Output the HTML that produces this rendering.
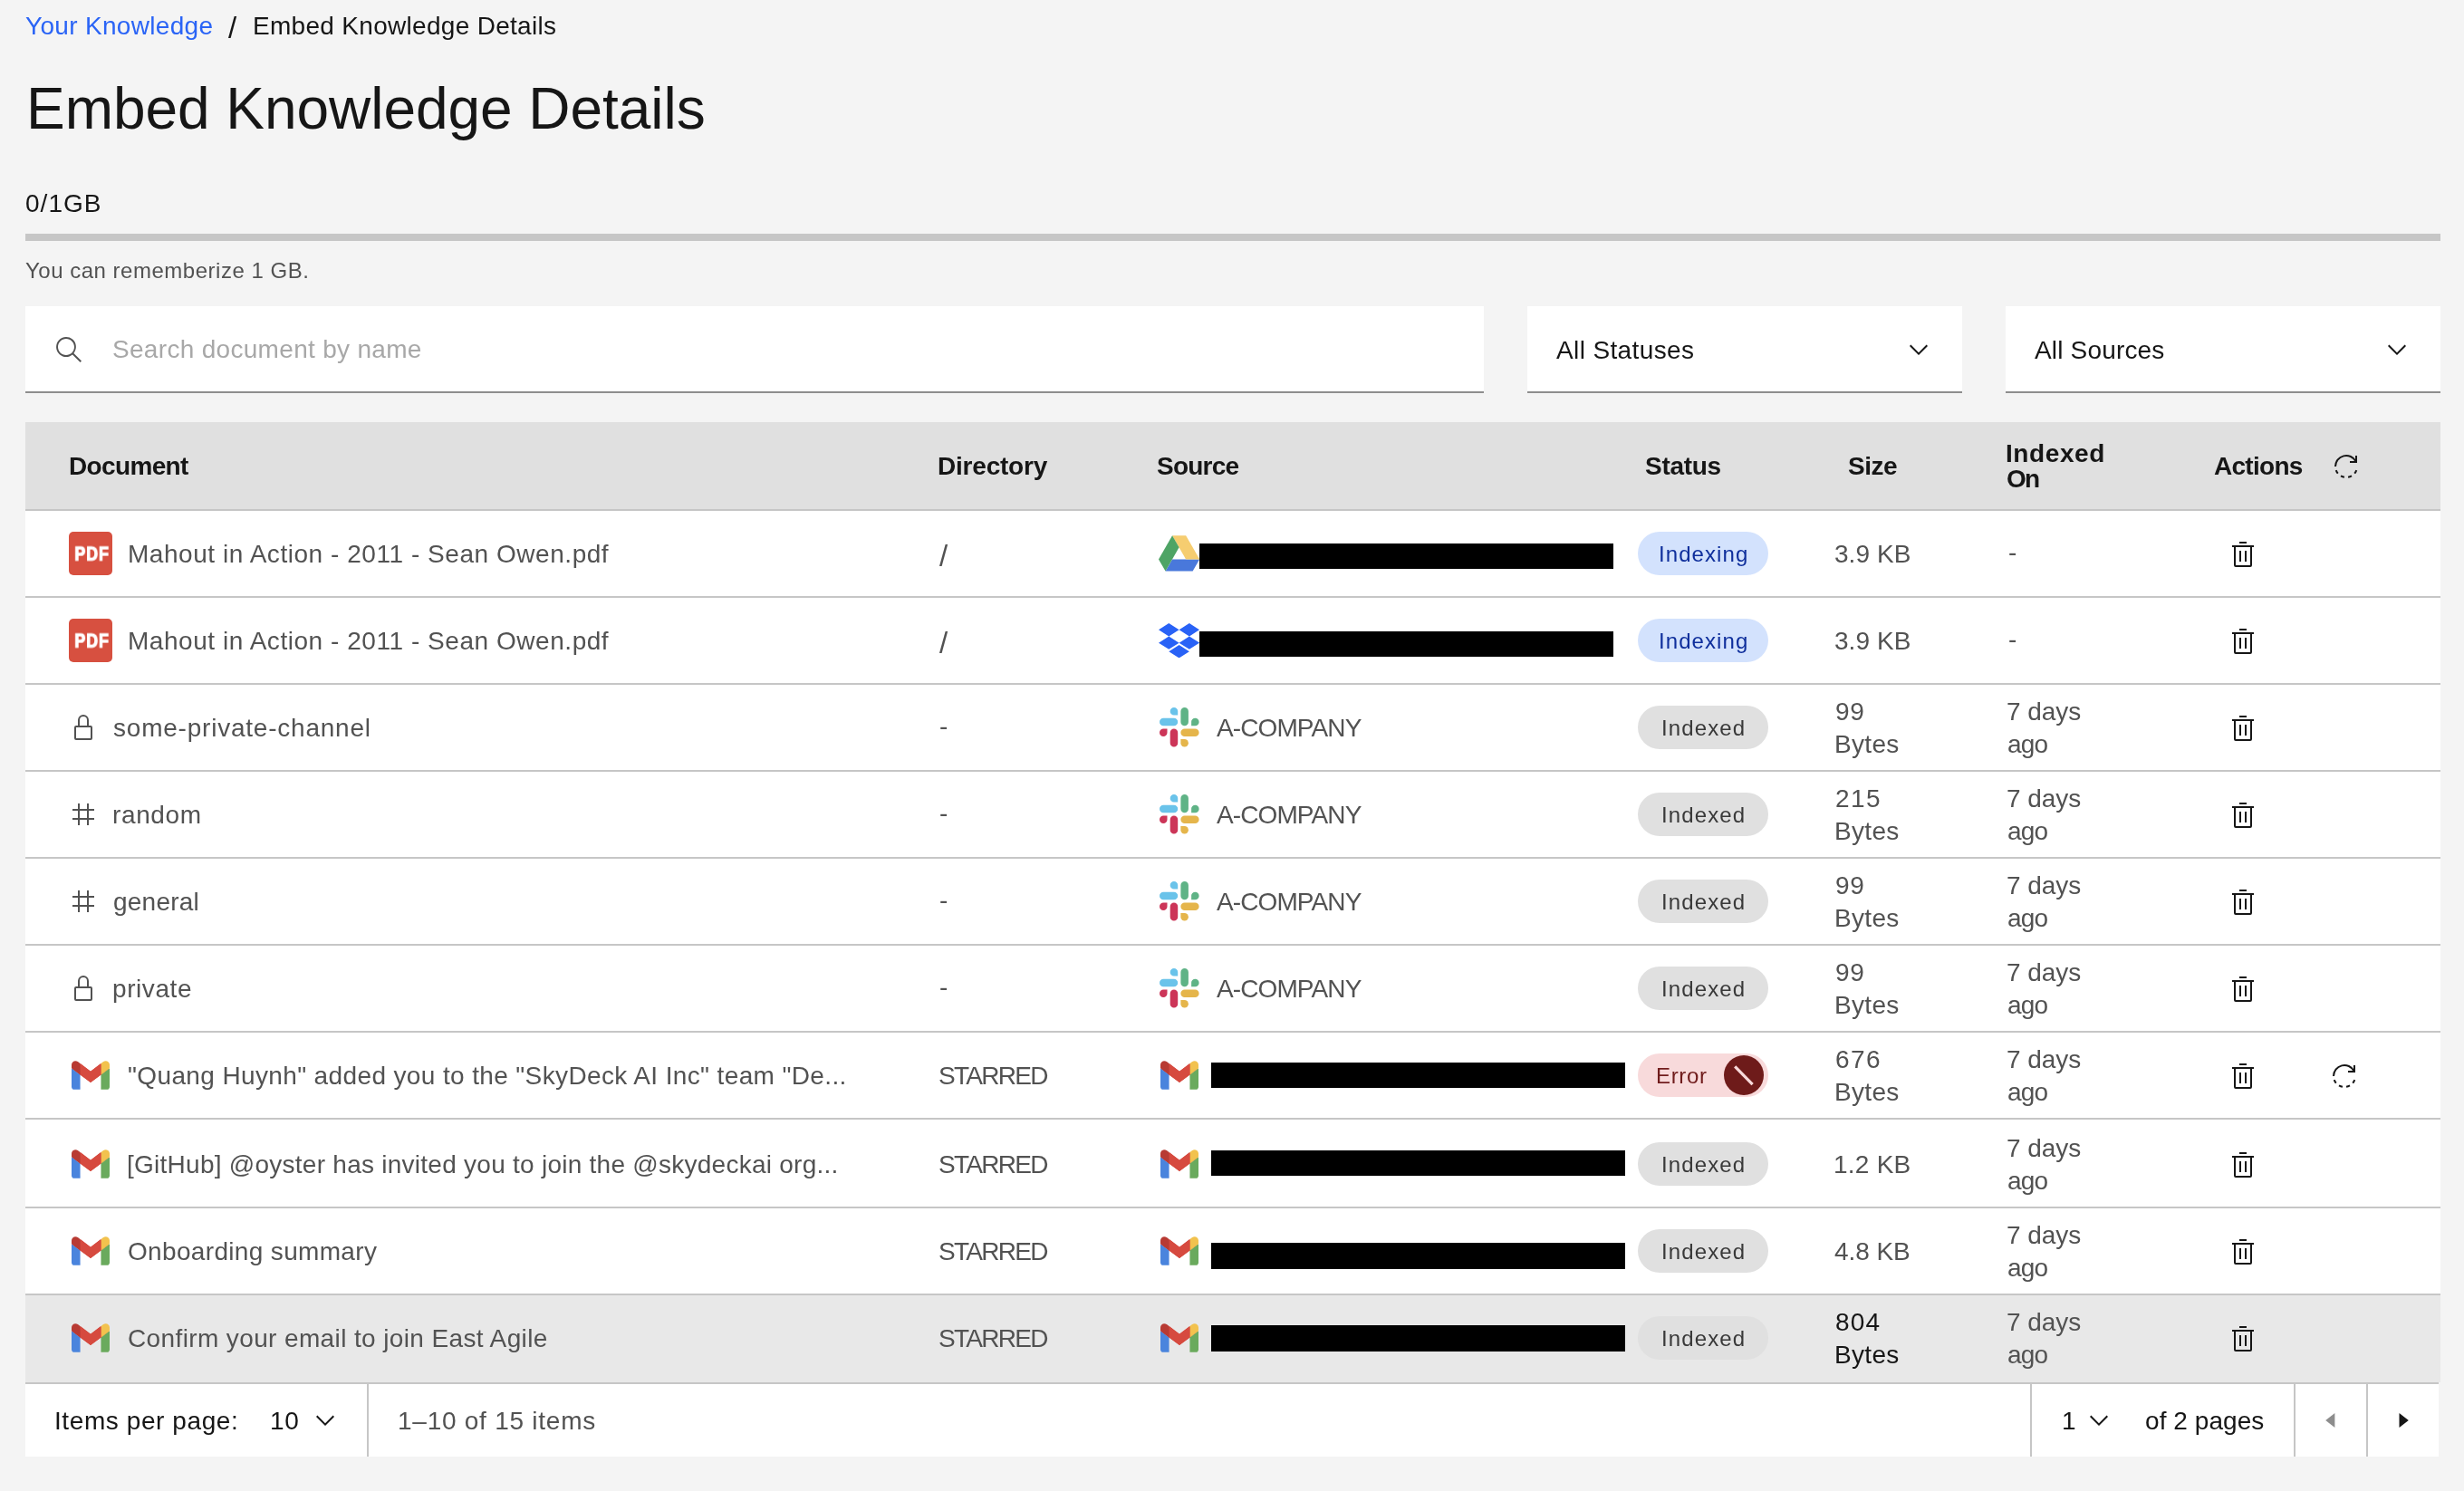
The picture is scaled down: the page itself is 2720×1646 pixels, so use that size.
<!DOCTYPE html>
<html lang="en"><head><meta charset="utf-8"><title>Embed Knowledge Details</title>
<style>
html,body{margin:0;padding:0;background:#f4f4f4;}
body{width:2720px;height:1646px;background:#f4f4f4;position:relative;overflow:hidden;font-family:"Liberation Sans",sans-serif;}
.b{position:absolute;display:block;}
.t{position:absolute;white-space:nowrap;line-height:1;will-change:transform;}
.pdf{width:48px;height:48px;border-radius:5px;background:#d75040;}
.pdf span{position:absolute;left:0;top:0;width:48px;text-align:center;font-weight:700;font-size:21.8px;line-height:1;color:#fff;letter-spacing:1.2px;-webkit-text-stroke:1.2px #fff;will-change:transform;transform:translate(1.6px,13.6px) scaleX(0.82);transform-origin:50% 50%;display:block;}
</style></head><body>
<div class="b" style="left:28px;top:258px;width:2666px;height:8px;background:#c6c6c6;"></div>
<div class="b" style="left:28px;top:338px;width:1610px;height:94px;background:#fff;"></div>
<div class="b" style="left:28px;top:432px;width:1610px;height:2px;background:#8d8d8d;"></div>
<div class="b" style="left:1686px;top:338px;width:480px;height:94px;background:#fff;"></div>
<div class="b" style="left:1686px;top:432px;width:480px;height:2px;background:#8d8d8d;"></div>
<div class="b" style="left:2214px;top:338px;width:480px;height:94px;background:#fff;"></div>
<div class="b" style="left:2214px;top:432px;width:480px;height:2px;background:#8d8d8d;"></div>
<div class="b" style="left:28px;top:466px;width:2666px;height:96px;background:#e0e0e0;"></div>
<div class="b" style="left:28px;top:562px;width:2666px;height:966px;background:#fff;"></div>
<div class="b" style="left:28px;top:1430px;width:2666px;height:96px;background:#e8e8e8;"></div>
<div class="b" style="left:28px;top:562px;width:2666px;height:2px;background:#c6c6c6;"></div>
<div class="b" style="left:28px;top:658px;width:2666px;height:2px;background:#c6c6c6;"></div>
<div class="b" style="left:28px;top:754px;width:2666px;height:2px;background:#c6c6c6;"></div>
<div class="b" style="left:28px;top:850px;width:2666px;height:2px;background:#c6c6c6;"></div>
<div class="b" style="left:28px;top:946px;width:2666px;height:2px;background:#c6c6c6;"></div>
<div class="b" style="left:28px;top:1042px;width:2666px;height:2px;background:#c6c6c6;"></div>
<div class="b" style="left:28px;top:1138px;width:2666px;height:2px;background:#c6c6c6;"></div>
<div class="b" style="left:28px;top:1234px;width:2666px;height:2px;background:#c6c6c6;"></div>
<div class="b" style="left:28px;top:1332px;width:2666px;height:2px;background:#c6c6c6;"></div>
<div class="b" style="left:28px;top:1428px;width:2666px;height:2px;background:#c6c6c6;"></div>
<div class="b" style="left:28px;top:1526px;width:2666px;height:2px;background:#c6c6c6;"></div>
<div class="b" style="left:28px;top:1528px;width:2664px;height:80px;background:#fff;"></div>
<div class="b" style="left:2692px;top:1526px;width:2px;height:82px;background:#f4f4f4;"></div>
<div class="b" style="left:405px;top:1528px;width:2px;height:80px;background:#c6c6c6;"></div>
<div class="b" style="left:2240.5px;top:1528px;width:2px;height:80px;background:#c6c6c6;"></div>
<div class="b" style="left:2531.5px;top:1528px;width:2px;height:80px;background:#c6c6c6;"></div>
<div class="b" style="left:2612.3px;top:1528px;width:2px;height:80px;background:#c6c6c6;"></div>
<div class="b" style="left:1324.4px;top:599.5px;width:457.0999999999999px;height:28.700000000000045px;background:#000;"></div>
<div class="b" style="left:1324.4px;top:696.6px;width:457.0999999999999px;height:28.699999999999932px;background:#000;"></div>
<div class="b" style="left:1337px;top:1172.7px;width:457.29999999999995px;height:28.59999999999991px;background:#000;"></div>
<div class="b" style="left:1337px;top:1269.6px;width:457.29999999999995px;height:28.800000000000182px;background:#000;"></div>
<div class="b" style="left:1337px;top:1372px;width:457.29999999999995px;height:29px;background:#000;"></div>
<div class="b" style="left:1337px;top:1462.8px;width:457.29999999999995px;height:28.799999999999955px;background:#000;"></div>
<div class="b" style="left:1808px;top:587.0px;width:144px;height:48px;background:#d3e2fd;border-radius:24px;"></div>
<div class="b" style="left:1808px;top:683.0px;width:144px;height:48px;background:#d3e2fd;border-radius:24px;"></div>
<div class="b" style="left:1808px;top:779.0px;width:144px;height:48px;background:#e0e0e0;border-radius:24px;"></div>
<div class="b" style="left:1808px;top:875.0px;width:144px;height:48px;background:#e0e0e0;border-radius:24px;"></div>
<div class="b" style="left:1808px;top:971.0px;width:144px;height:48px;background:#e0e0e0;border-radius:24px;"></div>
<div class="b" style="left:1808px;top:1067.0px;width:144px;height:48px;background:#e0e0e0;border-radius:24px;"></div>
<div class="b" style="left:1808px;top:1163.0px;width:144px;height:48px;background:#f8dadb;border-radius:24px;"></div>
<div class="b" style="left:1808px;top:1261.0px;width:144px;height:48px;background:#e0e0e0;border-radius:24px;"></div>
<div class="b" style="left:1808px;top:1357.0px;width:144px;height:48px;background:#e0e0e0;border-radius:24px;"></div>
<div class="b" style="left:1808px;top:1453.0px;width:144px;height:48px;background:#e0e0e0;border-radius:24px;"></div>
<svg class="b" style="left:60px;top:370px;" width="32" height="32" viewBox="0 0 16 16"><path fill="#525252" d="M15,14.3L10.7,10c1.9-2.3,1.6-5.8-0.7-7.7S4.2,0.7,2.3,3S0.7,8.8,3,10.7c2,1.7,5,1.7,7,0l4.3,4.3L15,14.3z M2,6.5C2,4,4,2,6.5,2S11,4,11,6.5S9,11,6.5,11S2,9,2,6.5z"/></svg>
<svg class="b" style="left:2102px;top:370px;" width="32" height="32" viewBox="0 0 16 16"><path fill="#161616" d="M8 11L3 6 3.7 5.3 8 9.6 12.3 5.3 13 6z"/></svg>
<svg class="b" style="left:2630px;top:370px;" width="32" height="32" viewBox="0 0 16 16"><path fill="#161616" d="M8 11L3 6 3.7 5.3 8 9.6 12.3 5.3 13 6z"/></svg>
<svg class="b" style="left:343px;top:1552px;" width="32" height="32" viewBox="0 0 16 16"><path fill="#161616" d="M8 11L3 6 3.7 5.3 8 9.6 12.3 5.3 13 6z"/></svg>
<svg class="b" style="left:2300.6px;top:1552px;" width="32" height="32" viewBox="0 0 16 16"><path fill="#161616" d="M8 11L3 6 3.7 5.3 8 9.6 12.3 5.3 13 6z"/></svg>
<svg class="b" style="left:2574px;top:499px;" width="32" height="32" viewBox="0 0 32 32"><path d="M4.00 16.00A12 12 0 0 1 26.60 10.37" fill="none" stroke="#161616" stroke-width="2"/><path d="M27.28 20.10A12 12 0 0 1 25.19 23.71" fill="none" stroke="#161616" stroke-width="2"/><path d="M22.00 26.39A12 12 0 0 1 18.08 27.82" fill="none" stroke="#161616" stroke-width="2"/><path d="M13.92 27.82A12 12 0 0 1 10.00 26.39" fill="none" stroke="#161616" stroke-width="2"/><path d="M6.81 23.71A12 12 0 0 1 4.72 20.10" fill="none" stroke="#161616" stroke-width="2"/><path d="M27 4V11H20" fill="none" stroke="#161616" stroke-width="2"/></svg>
<svg class="b" style="left:2560px;top:1552px" width="32" height="32" viewBox="0 0 32 32"><path fill="#8d8d8d" d="M17.4 8L7.2 16l10.2 8z"/></svg>
<svg class="b" style="left:2640px;top:1552px" width="32" height="32" viewBox="0 0 32 32"><path fill="#161616" d="M8.5 8L18.8 16 8.5 24z"/></svg>
<svg class="b" style="left:2460px;top:596.0px;" width="32" height="32" viewBox="0 0 32 32"><path fill="#161616" d="M12 12H14V24H12zM18 12H20V24H18z"/><path fill="#161616" d="M4 6V8H6V28a2 2 0 002 2H24a2 2 0 002-2V8h2V6zM8 28V8H24V28zM12 2H20V4H12z"/></svg>
<div class="b pdf" style="left:76px;top:587.0px"><span>PDF</span></div>
<svg class="b" style="left:1279.2px;top:591.0px;" width="45.2" height="39.8" viewBox="0 0 139 120.4"><polygon fill="#4978db" points="23.2,120.4 46.3,80.3 139,80.3 115.8,120.4"/><polygon fill="#f6cd70" points="92.7,80.3 139,80.3 92.7,0 46.3,0"/><polygon fill="#4ea465" points="0,80.3 23.2,120.4 69.5,40.1 46.3,0"/></svg>
<svg class="b" style="left:2460px;top:692.0px;" width="32" height="32" viewBox="0 0 32 32"><path fill="#161616" d="M12 12H14V24H12zM18 12H20V24H18z"/><path fill="#161616" d="M4 6V8H6V28a2 2 0 002 2H24a2 2 0 002-2V8h2V6zM8 28V8H24V28zM12 2H20V4H12z"/></svg>
<div class="b pdf" style="left:76px;top:683.0px"><span>PDF</span></div>
<svg class="b" style="left:1279.2px;top:687.7px;" width="45.2" height="38.5" viewBox="0 0 235.45 200"><path fill="#2962f6" d="M58.86 0L0 37.5 58.86 75l58.87-37.5zM176.59 0l-58.86 37.5L176.59 75l58.86-37.5zM0 112.5L58.86 150l58.87-37.5L58.86 75zM176.59 75l-58.86 37.5L176.59 150l58.86-37.5zM58.86 162.5L117.73 200l58.86-37.5L117.73 125z"/></svg>
<svg class="b" style="left:2460px;top:788.0px;" width="32" height="32" viewBox="0 0 32 32"><path fill="#161616" d="M12 12H14V24H12zM18 12H20V24H18z"/><path fill="#161616" d="M4 6V8H6V28a2 2 0 002 2H24a2 2 0 002-2V8h2V6zM8 28V8H24V28zM12 2H20V4H12z"/></svg>
<svg class="b" style="left:76px;top:787.0px;" width="32" height="32" viewBox="0 0 32 32"><path fill="#525252" d="M24,14H22V8A6,6,0,0,0,10,8v6H8a2,2,0,0,0-2,2V28a2,2,0,0,0,2,2H24a2,2,0,0,0,2-2V16A2,2,0,0,0,24,14ZM12,8a4,4,0,0,1,8,0v6H12ZM24,28H8V16H24Z"/></svg>
<svg class="b" style="left:1280.3px;top:781.2px;" width="43.6" height="43.6" viewBox="0 0 43.6 43.6"><path fill="#6ac3ea" d="M15.95 0.00H15.95A4.25 4.25 0 0 1 20.20 4.25V8.50A0 0 0 0 1 20.20 8.50H15.95A4.25 4.25 0 0 1 11.70 4.25V4.25A4.25 4.25 0 0 1 15.95 0.00Z"/><path fill="#6ac3ea" d="M4.25 11.70H15.95A4.25 4.25 0 0 1 20.20 15.95V15.95A4.25 4.25 0 0 1 15.95 20.20H4.25A4.25 4.25 0 0 1 0.00 15.95V15.95A4.25 4.25 0 0 1 4.25 11.70Z"/><path fill="#5fb386" d="M27.65 0.00H27.65A4.25 4.25 0 0 1 31.90 4.25V15.95A4.25 4.25 0 0 1 27.65 20.20H27.65A4.25 4.25 0 0 1 23.40 15.95V4.25A4.25 4.25 0 0 1 27.65 0.00Z"/><path fill="#5fb386" d="M39.35 11.70H39.35A4.25 4.25 0 0 1 43.60 15.95V15.95A4.25 4.25 0 0 1 39.35 20.20H35.10A0 0 0 0 1 35.10 20.20V15.95A4.25 4.25 0 0 1 39.35 11.70Z"/><path fill="#cc3558" d="M4.25 23.40H8.50A0 0 0 0 1 8.50 23.40V27.65A4.25 4.25 0 0 1 4.25 31.90H4.25A4.25 4.25 0 0 1 0.00 27.65V27.65A4.25 4.25 0 0 1 4.25 23.40Z"/><path fill="#cc3558" d="M15.95 23.40H15.95A4.25 4.25 0 0 1 20.20 27.65V39.35A4.25 4.25 0 0 1 15.95 43.60H15.95A4.25 4.25 0 0 1 11.70 39.35V27.65A4.25 4.25 0 0 1 15.95 23.40Z"/><path fill="#e5b54b" d="M27.65 23.40H39.35A4.25 4.25 0 0 1 43.60 27.65V27.65A4.25 4.25 0 0 1 39.35 31.90H27.65A4.25 4.25 0 0 1 23.40 27.65V27.65A4.25 4.25 0 0 1 27.65 23.40Z"/><path fill="#e5b54b" d="M23.40 35.10H27.65A4.25 4.25 0 0 1 31.90 39.35V39.35A4.25 4.25 0 0 1 27.65 43.60H27.65A4.25 4.25 0 0 1 23.40 39.35V35.10A0 0 0 0 1 23.40 35.10Z"/></svg>
<svg class="b" style="left:2460px;top:884.0px;" width="32" height="32" viewBox="0 0 32 32"><path fill="#161616" d="M12 12H14V24H12zM18 12H20V24H18z"/><path fill="#161616" d="M4 6V8H6V28a2 2 0 002 2H24a2 2 0 002-2V8h2V6zM8 28V8H24V28zM12 2H20V4H12z"/></svg>
<svg class="b" style="left:76px;top:883.0px;" width="32" height="32" viewBox="0 0 32 32"><path fill="#525252" d="M28,12V10H22V4H20v6H12V4H10v6H4v2h6v8H4v2h6v6h2V22h8v6h2V22h6V20H22V12Zm-8,8H12V12h8Z"/></svg>
<svg class="b" style="left:1280.3px;top:877.2px;" width="43.6" height="43.6" viewBox="0 0 43.6 43.6"><path fill="#6ac3ea" d="M15.95 0.00H15.95A4.25 4.25 0 0 1 20.20 4.25V8.50A0 0 0 0 1 20.20 8.50H15.95A4.25 4.25 0 0 1 11.70 4.25V4.25A4.25 4.25 0 0 1 15.95 0.00Z"/><path fill="#6ac3ea" d="M4.25 11.70H15.95A4.25 4.25 0 0 1 20.20 15.95V15.95A4.25 4.25 0 0 1 15.95 20.20H4.25A4.25 4.25 0 0 1 0.00 15.95V15.95A4.25 4.25 0 0 1 4.25 11.70Z"/><path fill="#5fb386" d="M27.65 0.00H27.65A4.25 4.25 0 0 1 31.90 4.25V15.95A4.25 4.25 0 0 1 27.65 20.20H27.65A4.25 4.25 0 0 1 23.40 15.95V4.25A4.25 4.25 0 0 1 27.65 0.00Z"/><path fill="#5fb386" d="M39.35 11.70H39.35A4.25 4.25 0 0 1 43.60 15.95V15.95A4.25 4.25 0 0 1 39.35 20.20H35.10A0 0 0 0 1 35.10 20.20V15.95A4.25 4.25 0 0 1 39.35 11.70Z"/><path fill="#cc3558" d="M4.25 23.40H8.50A0 0 0 0 1 8.50 23.40V27.65A4.25 4.25 0 0 1 4.25 31.90H4.25A4.25 4.25 0 0 1 0.00 27.65V27.65A4.25 4.25 0 0 1 4.25 23.40Z"/><path fill="#cc3558" d="M15.95 23.40H15.95A4.25 4.25 0 0 1 20.20 27.65V39.35A4.25 4.25 0 0 1 15.95 43.60H15.95A4.25 4.25 0 0 1 11.70 39.35V27.65A4.25 4.25 0 0 1 15.95 23.40Z"/><path fill="#e5b54b" d="M27.65 23.40H39.35A4.25 4.25 0 0 1 43.60 27.65V27.65A4.25 4.25 0 0 1 39.35 31.90H27.65A4.25 4.25 0 0 1 23.40 27.65V27.65A4.25 4.25 0 0 1 27.65 23.40Z"/><path fill="#e5b54b" d="M23.40 35.10H27.65A4.25 4.25 0 0 1 31.90 39.35V39.35A4.25 4.25 0 0 1 27.65 43.60H27.65A4.25 4.25 0 0 1 23.40 39.35V35.10A0 0 0 0 1 23.40 35.10Z"/></svg>
<svg class="b" style="left:2460px;top:980.0px;" width="32" height="32" viewBox="0 0 32 32"><path fill="#161616" d="M12 12H14V24H12zM18 12H20V24H18z"/><path fill="#161616" d="M4 6V8H6V28a2 2 0 002 2H24a2 2 0 002-2V8h2V6zM8 28V8H24V28zM12 2H20V4H12z"/></svg>
<svg class="b" style="left:76px;top:979.0px;" width="32" height="32" viewBox="0 0 32 32"><path fill="#525252" d="M28,12V10H22V4H20v6H12V4H10v6H4v2h6v8H4v2h6v6h2V22h8v6h2V22h6V20H22V12Zm-8,8H12V12h8Z"/></svg>
<svg class="b" style="left:1280.3px;top:973.2px;" width="43.6" height="43.6" viewBox="0 0 43.6 43.6"><path fill="#6ac3ea" d="M15.95 0.00H15.95A4.25 4.25 0 0 1 20.20 4.25V8.50A0 0 0 0 1 20.20 8.50H15.95A4.25 4.25 0 0 1 11.70 4.25V4.25A4.25 4.25 0 0 1 15.95 0.00Z"/><path fill="#6ac3ea" d="M4.25 11.70H15.95A4.25 4.25 0 0 1 20.20 15.95V15.95A4.25 4.25 0 0 1 15.95 20.20H4.25A4.25 4.25 0 0 1 0.00 15.95V15.95A4.25 4.25 0 0 1 4.25 11.70Z"/><path fill="#5fb386" d="M27.65 0.00H27.65A4.25 4.25 0 0 1 31.90 4.25V15.95A4.25 4.25 0 0 1 27.65 20.20H27.65A4.25 4.25 0 0 1 23.40 15.95V4.25A4.25 4.25 0 0 1 27.65 0.00Z"/><path fill="#5fb386" d="M39.35 11.70H39.35A4.25 4.25 0 0 1 43.60 15.95V15.95A4.25 4.25 0 0 1 39.35 20.20H35.10A0 0 0 0 1 35.10 20.20V15.95A4.25 4.25 0 0 1 39.35 11.70Z"/><path fill="#cc3558" d="M4.25 23.40H8.50A0 0 0 0 1 8.50 23.40V27.65A4.25 4.25 0 0 1 4.25 31.90H4.25A4.25 4.25 0 0 1 0.00 27.65V27.65A4.25 4.25 0 0 1 4.25 23.40Z"/><path fill="#cc3558" d="M15.95 23.40H15.95A4.25 4.25 0 0 1 20.20 27.65V39.35A4.25 4.25 0 0 1 15.95 43.60H15.95A4.25 4.25 0 0 1 11.70 39.35V27.65A4.25 4.25 0 0 1 15.95 23.40Z"/><path fill="#e5b54b" d="M27.65 23.40H39.35A4.25 4.25 0 0 1 43.60 27.65V27.65A4.25 4.25 0 0 1 39.35 31.90H27.65A4.25 4.25 0 0 1 23.40 27.65V27.65A4.25 4.25 0 0 1 27.65 23.40Z"/><path fill="#e5b54b" d="M23.40 35.10H27.65A4.25 4.25 0 0 1 31.90 39.35V39.35A4.25 4.25 0 0 1 27.65 43.60H27.65A4.25 4.25 0 0 1 23.40 39.35V35.10A0 0 0 0 1 23.40 35.10Z"/></svg>
<svg class="b" style="left:2460px;top:1076.0px;" width="32" height="32" viewBox="0 0 32 32"><path fill="#161616" d="M12 12H14V24H12zM18 12H20V24H18z"/><path fill="#161616" d="M4 6V8H6V28a2 2 0 002 2H24a2 2 0 002-2V8h2V6zM8 28V8H24V28zM12 2H20V4H12z"/></svg>
<svg class="b" style="left:76px;top:1075.0px;" width="32" height="32" viewBox="0 0 32 32"><path fill="#525252" d="M24,14H22V8A6,6,0,0,0,10,8v6H8a2,2,0,0,0-2,2V28a2,2,0,0,0,2,2H24a2,2,0,0,0,2-2V16A2,2,0,0,0,24,14ZM12,8a4,4,0,0,1,8,0v6H12ZM24,28H8V16H24Z"/></svg>
<svg class="b" style="left:1280.3px;top:1069.2px;" width="43.6" height="43.6" viewBox="0 0 43.6 43.6"><path fill="#6ac3ea" d="M15.95 0.00H15.95A4.25 4.25 0 0 1 20.20 4.25V8.50A0 0 0 0 1 20.20 8.50H15.95A4.25 4.25 0 0 1 11.70 4.25V4.25A4.25 4.25 0 0 1 15.95 0.00Z"/><path fill="#6ac3ea" d="M4.25 11.70H15.95A4.25 4.25 0 0 1 20.20 15.95V15.95A4.25 4.25 0 0 1 15.95 20.20H4.25A4.25 4.25 0 0 1 0.00 15.95V15.95A4.25 4.25 0 0 1 4.25 11.70Z"/><path fill="#5fb386" d="M27.65 0.00H27.65A4.25 4.25 0 0 1 31.90 4.25V15.95A4.25 4.25 0 0 1 27.65 20.20H27.65A4.25 4.25 0 0 1 23.40 15.95V4.25A4.25 4.25 0 0 1 27.65 0.00Z"/><path fill="#5fb386" d="M39.35 11.70H39.35A4.25 4.25 0 0 1 43.60 15.95V15.95A4.25 4.25 0 0 1 39.35 20.20H35.10A0 0 0 0 1 35.10 20.20V15.95A4.25 4.25 0 0 1 39.35 11.70Z"/><path fill="#cc3558" d="M4.25 23.40H8.50A0 0 0 0 1 8.50 23.40V27.65A4.25 4.25 0 0 1 4.25 31.90H4.25A4.25 4.25 0 0 1 0.00 27.65V27.65A4.25 4.25 0 0 1 4.25 23.40Z"/><path fill="#cc3558" d="M15.95 23.40H15.95A4.25 4.25 0 0 1 20.20 27.65V39.35A4.25 4.25 0 0 1 15.95 43.60H15.95A4.25 4.25 0 0 1 11.70 39.35V27.65A4.25 4.25 0 0 1 15.95 23.40Z"/><path fill="#e5b54b" d="M27.65 23.40H39.35A4.25 4.25 0 0 1 43.60 27.65V27.65A4.25 4.25 0 0 1 39.35 31.90H27.65A4.25 4.25 0 0 1 23.40 27.65V27.65A4.25 4.25 0 0 1 27.65 23.40Z"/><path fill="#e5b54b" d="M23.40 35.10H27.65A4.25 4.25 0 0 1 31.90 39.35V39.35A4.25 4.25 0 0 1 27.65 43.60H27.65A4.25 4.25 0 0 1 23.40 39.35V35.10A0 0 0 0 1 23.40 35.10Z"/></svg>
<svg class="b" style="left:2460px;top:1172.0px;" width="32" height="32" viewBox="0 0 32 32"><path fill="#161616" d="M12 12H14V24H12zM18 12H20V24H18z"/><path fill="#161616" d="M4 6V8H6V28a2 2 0 002 2H24a2 2 0 002-2V8h2V6zM8 28V8H24V28zM12 2H20V4H12z"/></svg>
<svg class="b" style="left:79px;top:1171.0px;" width="42" height="32" viewBox="52 42 88 66"><path fill="#d64a3f" d="M72 74V48l24 18 24-18v26L96 92"/><path fill="#d64a3f" d="M54 50L73 50 73 75 54 61zM138 50L119 50 119 75 138 61z"/><path fill="#4a84dd" d="M58 108h14V74L52 59v43c0 3.32 2.69 6 6 6"/><path fill="#6aaa5d" d="M120 108h14c3.32 0 6-2.69 6-6V59l-20 15"/><path fill="#f2c24e" d="M120 48v26l20-15v-8c0-7.42-8.47-11.65-14.4-7.2"/><path fill="#d64a3f" d="M72 74V48l24 18 24-18v26L96 92"/><path fill="#b83a33" d="M52 51v8l20 15V48l-5.6-4.2c-5.94-4.45-14.4-.22-14.4 7.2"/></svg>
<svg class="b" style="left:1281px;top:1171.0px;" width="42" height="32" viewBox="52 42 88 66"><path fill="#d64a3f" d="M72 74V48l24 18 24-18v26L96 92"/><path fill="#d64a3f" d="M54 50L73 50 73 75 54 61zM138 50L119 50 119 75 138 61z"/><path fill="#4a84dd" d="M58 108h14V74L52 59v43c0 3.32 2.69 6 6 6"/><path fill="#6aaa5d" d="M120 108h14c3.32 0 6-2.69 6-6V59l-20 15"/><path fill="#f2c24e" d="M120 48v26l20-15v-8c0-7.42-8.47-11.65-14.4-7.2"/><path fill="#d64a3f" d="M72 74V48l24 18 24-18v26L96 92"/><path fill="#b83a33" d="M52 51v8l20 15V48l-5.6-4.2c-5.94-4.45-14.4-.22-14.4 7.2"/></svg>
<svg class="b" style="left:2572px;top:1172.0px;" width="32" height="32" viewBox="0 0 32 32"><path d="M4.00 16.00A12 12 0 0 1 26.60 10.37" fill="none" stroke="#161616" stroke-width="2"/><path d="M27.28 20.10A12 12 0 0 1 25.19 23.71" fill="none" stroke="#161616" stroke-width="2"/><path d="M22.00 26.39A12 12 0 0 1 18.08 27.82" fill="none" stroke="#161616" stroke-width="2"/><path d="M13.92 27.82A12 12 0 0 1 10.00 26.39" fill="none" stroke="#161616" stroke-width="2"/><path d="M6.81 23.71A12 12 0 0 1 4.72 20.10" fill="none" stroke="#161616" stroke-width="2"/><path d="M27 4V11H20" fill="none" stroke="#161616" stroke-width="2"/></svg>
<svg class="b" style="left:1903px;top:1165.0px" width="44" height="44" viewBox="0 0 44 44"><circle cx="22" cy="22" r="22" fill="#6e1b1a"/><path d="M12.2 12.3L31.6 32.1" stroke="#f8dadb" stroke-width="3.2"/></svg>
<svg class="b" style="left:2460px;top:1270.0px;" width="32" height="32" viewBox="0 0 32 32"><path fill="#161616" d="M12 12H14V24H12zM18 12H20V24H18z"/><path fill="#161616" d="M4 6V8H6V28a2 2 0 002 2H24a2 2 0 002-2V8h2V6zM8 28V8H24V28zM12 2H20V4H12z"/></svg>
<svg class="b" style="left:79px;top:1269.0px;" width="42" height="32" viewBox="52 42 88 66"><path fill="#d64a3f" d="M72 74V48l24 18 24-18v26L96 92"/><path fill="#d64a3f" d="M54 50L73 50 73 75 54 61zM138 50L119 50 119 75 138 61z"/><path fill="#4a84dd" d="M58 108h14V74L52 59v43c0 3.32 2.69 6 6 6"/><path fill="#6aaa5d" d="M120 108h14c3.32 0 6-2.69 6-6V59l-20 15"/><path fill="#f2c24e" d="M120 48v26l20-15v-8c0-7.42-8.47-11.65-14.4-7.2"/><path fill="#d64a3f" d="M72 74V48l24 18 24-18v26L96 92"/><path fill="#b83a33" d="M52 51v8l20 15V48l-5.6-4.2c-5.94-4.45-14.4-.22-14.4 7.2"/></svg>
<svg class="b" style="left:1281px;top:1269.0px;" width="42" height="32" viewBox="52 42 88 66"><path fill="#d64a3f" d="M72 74V48l24 18 24-18v26L96 92"/><path fill="#d64a3f" d="M54 50L73 50 73 75 54 61zM138 50L119 50 119 75 138 61z"/><path fill="#4a84dd" d="M58 108h14V74L52 59v43c0 3.32 2.69 6 6 6"/><path fill="#6aaa5d" d="M120 108h14c3.32 0 6-2.69 6-6V59l-20 15"/><path fill="#f2c24e" d="M120 48v26l20-15v-8c0-7.42-8.47-11.65-14.4-7.2"/><path fill="#d64a3f" d="M72 74V48l24 18 24-18v26L96 92"/><path fill="#b83a33" d="M52 51v8l20 15V48l-5.6-4.2c-5.94-4.45-14.4-.22-14.4 7.2"/></svg>
<svg class="b" style="left:2460px;top:1366.0px;" width="32" height="32" viewBox="0 0 32 32"><path fill="#161616" d="M12 12H14V24H12zM18 12H20V24H18z"/><path fill="#161616" d="M4 6V8H6V28a2 2 0 002 2H24a2 2 0 002-2V8h2V6zM8 28V8H24V28zM12 2H20V4H12z"/></svg>
<svg class="b" style="left:79px;top:1365.0px;" width="42" height="32" viewBox="52 42 88 66"><path fill="#d64a3f" d="M72 74V48l24 18 24-18v26L96 92"/><path fill="#d64a3f" d="M54 50L73 50 73 75 54 61zM138 50L119 50 119 75 138 61z"/><path fill="#4a84dd" d="M58 108h14V74L52 59v43c0 3.32 2.69 6 6 6"/><path fill="#6aaa5d" d="M120 108h14c3.32 0 6-2.69 6-6V59l-20 15"/><path fill="#f2c24e" d="M120 48v26l20-15v-8c0-7.42-8.47-11.65-14.4-7.2"/><path fill="#d64a3f" d="M72 74V48l24 18 24-18v26L96 92"/><path fill="#b83a33" d="M52 51v8l20 15V48l-5.6-4.2c-5.94-4.45-14.4-.22-14.4 7.2"/></svg>
<svg class="b" style="left:1281px;top:1365.0px;" width="42" height="32" viewBox="52 42 88 66"><path fill="#d64a3f" d="M72 74V48l24 18 24-18v26L96 92"/><path fill="#d64a3f" d="M54 50L73 50 73 75 54 61zM138 50L119 50 119 75 138 61z"/><path fill="#4a84dd" d="M58 108h14V74L52 59v43c0 3.32 2.69 6 6 6"/><path fill="#6aaa5d" d="M120 108h14c3.32 0 6-2.69 6-6V59l-20 15"/><path fill="#f2c24e" d="M120 48v26l20-15v-8c0-7.42-8.47-11.65-14.4-7.2"/><path fill="#d64a3f" d="M72 74V48l24 18 24-18v26L96 92"/><path fill="#b83a33" d="M52 51v8l20 15V48l-5.6-4.2c-5.94-4.45-14.4-.22-14.4 7.2"/></svg>
<svg class="b" style="left:2460px;top:1462.0px;" width="32" height="32" viewBox="0 0 32 32"><path fill="#161616" d="M12 12H14V24H12zM18 12H20V24H18z"/><path fill="#161616" d="M4 6V8H6V28a2 2 0 002 2H24a2 2 0 002-2V8h2V6zM8 28V8H24V28zM12 2H20V4H12z"/></svg>
<svg class="b" style="left:79px;top:1461.0px;" width="42" height="32" viewBox="52 42 88 66"><path fill="#d64a3f" d="M72 74V48l24 18 24-18v26L96 92"/><path fill="#d64a3f" d="M54 50L73 50 73 75 54 61zM138 50L119 50 119 75 138 61z"/><path fill="#4a84dd" d="M58 108h14V74L52 59v43c0 3.32 2.69 6 6 6"/><path fill="#6aaa5d" d="M120 108h14c3.32 0 6-2.69 6-6V59l-20 15"/><path fill="#f2c24e" d="M120 48v26l20-15v-8c0-7.42-8.47-11.65-14.4-7.2"/><path fill="#d64a3f" d="M72 74V48l24 18 24-18v26L96 92"/><path fill="#b83a33" d="M52 51v8l20 15V48l-5.6-4.2c-5.94-4.45-14.4-.22-14.4 7.2"/></svg>
<svg class="b" style="left:1281px;top:1461.0px;" width="42" height="32" viewBox="52 42 88 66"><path fill="#d64a3f" d="M72 74V48l24 18 24-18v26L96 92"/><path fill="#d64a3f" d="M54 50L73 50 73 75 54 61zM138 50L119 50 119 75 138 61z"/><path fill="#4a84dd" d="M58 108h14V74L52 59v43c0 3.32 2.69 6 6 6"/><path fill="#6aaa5d" d="M120 108h14c3.32 0 6-2.69 6-6V59l-20 15"/><path fill="#f2c24e" d="M120 48v26l20-15v-8c0-7.42-8.47-11.65-14.4-7.2"/><path fill="#d64a3f" d="M72 74V48l24 18 24-18v26L96 92"/><path fill="#b83a33" d="M52 51v8l20 15V48l-5.6-4.2c-5.94-4.45-14.4-.22-14.4 7.2"/></svg>
<div class="t" style="left:27.66px;top:15.00px;font-size:28px;color:#2a64f6;letter-spacing:0.322px;">Your Knowledge</div>
<div class="t" style="left:252.08px;top:14.00px;font-size:33px;color:#161616;">/</div>
<div class="t" style="left:279.24px;top:15.00px;font-size:28px;color:#161616;letter-spacing:0.301px;">Embed Knowledge Details</div>
<div class="t" style="left:28.63px;top:88.00px;font-size:64px;color:#161616;letter-spacing:-0.043px;">Embed Knowledge Details</div>
<div class="t" style="left:28.39px;top:211.00px;font-size:28px;color:#161616;letter-spacing:1.031px;">0/1GB</div>
<div class="t" style="left:27.80px;top:287.00px;font-size:24px;color:#525252;letter-spacing:0.509px;">You can rememberize 1 GB.</div>
<div class="t" style="left:124.08px;top:372.00px;font-size:28px;color:#a8a8a8;letter-spacing:0.309px;">Search document by name</div>
<div class="t" style="left:1718.40px;top:373.00px;font-size:28px;color:#161616;letter-spacing:0.377px;">All Statuses</div>
<div class="t" style="left:2246.05px;top:373.00px;font-size:28px;color:#161616;letter-spacing:0.172px;">All Sources</div>
<div class="t" style="left:76.47px;top:501.00px;font-size:28px;color:#161616;letter-spacing:-0.650px;font-weight:700;">Document</div>
<div class="t" style="left:1034.87px;top:501.00px;font-size:28px;color:#161616;letter-spacing:-0.207px;font-weight:700;">Directory</div>
<div class="t" style="left:1277.43px;top:501.00px;font-size:28px;color:#161616;letter-spacing:-0.753px;font-weight:700;">Source</div>
<div class="t" style="left:1816.13px;top:501.00px;font-size:28px;color:#161616;letter-spacing:-0.300px;font-weight:700;">Status</div>
<div class="t" style="left:2040.13px;top:501.00px;font-size:28px;color:#161616;letter-spacing:-0.481px;font-weight:700;">Size</div>
<div class="t" style="left:2213.97px;top:487.00px;font-size:28px;color:#161616;letter-spacing:0.583px;font-weight:700;">Indexed</div>
<div class="t" style="left:2214.55px;top:515.00px;font-size:28px;color:#161616;letter-spacing:-1.808px;font-weight:700;">On</div>
<div class="t" style="left:2444.17px;top:501.00px;font-size:28px;color:#161616;letter-spacing:-0.724px;font-weight:700;">Actions</div>
<div class="t" style="left:140.64px;top:598.00px;font-size:28px;color:#525252;letter-spacing:0.543px;">Mahout in Action - 2011 - Sean Owen.pdf</div>
<div class="t" style="left:1036.78px;top:597.00px;font-size:33px;color:#525252;">/</div>
<div class="t" style="left:2024.81px;top:598.00px;font-size:28px;color:#525252;letter-spacing:0.051px;">3.9 KB</div>
<div class="t" style="left:2216.88px;top:596.00px;font-size:28px;color:#525252;">-</div>
<div class="t" style="left:1831.11px;top:600.00px;font-size:24px;color:#0f2f9c;letter-spacing:1.075px;">Indexing</div>
<div class="t" style="left:140.64px;top:694.00px;font-size:28px;color:#525252;letter-spacing:0.543px;">Mahout in Action - 2011 - Sean Owen.pdf</div>
<div class="t" style="left:1036.78px;top:693.00px;font-size:33px;color:#525252;">/</div>
<div class="t" style="left:2024.81px;top:694.00px;font-size:28px;color:#525252;letter-spacing:0.051px;">3.9 KB</div>
<div class="t" style="left:2216.88px;top:692.00px;font-size:28px;color:#525252;">-</div>
<div class="t" style="left:1831.11px;top:696.00px;font-size:24px;color:#0f2f9c;letter-spacing:1.075px;">Indexing</div>
<div class="t" style="left:124.78px;top:790.00px;font-size:28px;color:#525252;letter-spacing:0.778px;">some-private-channel</div>
<div class="t" style="left:1036.68px;top:788.00px;font-size:28px;color:#525252;">-</div>
<div class="t" style="left:1342.85px;top:790.00px;font-size:28px;color:#525252;letter-spacing:-0.890px;">A-COMPANY</div>
<div class="t" style="left:2025.79px;top:772.00px;font-size:28px;color:#525252;letter-spacing:0.627px;">99</div>
<div class="t" style="left:2024.84px;top:808.00px;font-size:28px;color:#525252;letter-spacing:0.312px;">Bytes</div>
<div class="t" style="left:2215.33px;top:772.00px;font-size:28px;color:#525252;letter-spacing:-0.052px;">7 days</div>
<div class="t" style="left:2215.51px;top:808.00px;font-size:28px;color:#525252;letter-spacing:-0.854px;">ago</div>
<div class="t" style="left:1834.01px;top:792.00px;font-size:24px;color:#393939;letter-spacing:1.114px;">Indexed</div>
<div class="t" style="left:124.17px;top:886.00px;font-size:28px;color:#525252;letter-spacing:0.624px;">random</div>
<div class="t" style="left:1036.68px;top:884.00px;font-size:28px;color:#525252;">-</div>
<div class="t" style="left:1342.85px;top:886.00px;font-size:28px;color:#525252;letter-spacing:-0.890px;">A-COMPANY</div>
<div class="t" style="left:2025.75px;top:868.00px;font-size:28px;color:#525252;letter-spacing:1.390px;">215</div>
<div class="t" style="left:2024.84px;top:904.00px;font-size:28px;color:#525252;letter-spacing:0.312px;">Bytes</div>
<div class="t" style="left:2215.33px;top:868.00px;font-size:28px;color:#525252;letter-spacing:-0.052px;">7 days</div>
<div class="t" style="left:2215.51px;top:904.00px;font-size:28px;color:#525252;letter-spacing:-0.854px;">ago</div>
<div class="t" style="left:1834.01px;top:888.00px;font-size:24px;color:#393939;letter-spacing:1.114px;">Indexed</div>
<div class="t" style="left:124.75px;top:982.00px;font-size:28px;color:#525252;letter-spacing:0.231px;">general</div>
<div class="t" style="left:1036.68px;top:980.00px;font-size:28px;color:#525252;">-</div>
<div class="t" style="left:1342.85px;top:982.00px;font-size:28px;color:#525252;letter-spacing:-0.890px;">A-COMPANY</div>
<div class="t" style="left:2025.79px;top:964.00px;font-size:28px;color:#525252;letter-spacing:0.627px;">99</div>
<div class="t" style="left:2024.84px;top:1000.00px;font-size:28px;color:#525252;letter-spacing:0.312px;">Bytes</div>
<div class="t" style="left:2215.33px;top:964.00px;font-size:28px;color:#525252;letter-spacing:-0.052px;">7 days</div>
<div class="t" style="left:2215.51px;top:1000.00px;font-size:28px;color:#525252;letter-spacing:-0.854px;">ago</div>
<div class="t" style="left:1834.01px;top:984.00px;font-size:24px;color:#393939;letter-spacing:1.114px;">Indexed</div>
<div class="t" style="left:124.21px;top:1078.00px;font-size:28px;color:#525252;letter-spacing:0.575px;">private</div>
<div class="t" style="left:1036.68px;top:1076.00px;font-size:28px;color:#525252;">-</div>
<div class="t" style="left:1342.85px;top:1078.00px;font-size:28px;color:#525252;letter-spacing:-0.890px;">A-COMPANY</div>
<div class="t" style="left:2025.79px;top:1060.00px;font-size:28px;color:#525252;letter-spacing:0.627px;">99</div>
<div class="t" style="left:2024.84px;top:1096.00px;font-size:28px;color:#525252;letter-spacing:0.312px;">Bytes</div>
<div class="t" style="left:2215.33px;top:1060.00px;font-size:28px;color:#525252;letter-spacing:-0.052px;">7 days</div>
<div class="t" style="left:2215.51px;top:1096.00px;font-size:28px;color:#525252;letter-spacing:-0.854px;">ago</div>
<div class="t" style="left:1834.01px;top:1080.00px;font-size:24px;color:#393939;letter-spacing:1.114px;">Indexed</div>
<div class="t" style="left:141.21px;top:1174.00px;font-size:28px;color:#525252;letter-spacing:0.370px;">"Quang Huynh" added you to the "SkyDeck AI Inc" team "De...</div>
<div class="t" style="left:1036.18px;top:1174.00px;font-size:28px;color:#525252;letter-spacing:-1.720px;">STARRED</div>
<div class="t" style="left:2025.72px;top:1156.00px;font-size:28px;color:#525252;letter-spacing:1.418px;">676</div>
<div class="t" style="left:2024.84px;top:1192.00px;font-size:28px;color:#525252;letter-spacing:0.312px;">Bytes</div>
<div class="t" style="left:2215.33px;top:1156.00px;font-size:28px;color:#525252;letter-spacing:-0.052px;">7 days</div>
<div class="t" style="left:2215.51px;top:1192.00px;font-size:28px;color:#525252;letter-spacing:-0.854px;">ago</div>
<div class="t" style="left:1828.48px;top:1176.00px;font-size:24px;color:#701c1c;letter-spacing:0.647px;">Error</div>
<div class="t" style="left:140.37px;top:1272.00px;font-size:28px;color:#525252;letter-spacing:0.258px;">[GitHub] @oyster has invited you to join the @skydeckai org...</div>
<div class="t" style="left:1036.18px;top:1272.00px;font-size:28px;color:#525252;letter-spacing:-1.720px;">STARRED</div>
<div class="t" style="left:2023.88px;top:1272.00px;font-size:28px;color:#525252;letter-spacing:0.238px;">1.2 KB</div>
<div class="t" style="left:2215.33px;top:1254.00px;font-size:28px;color:#525252;letter-spacing:-0.052px;">7 days</div>
<div class="t" style="left:2215.51px;top:1290.00px;font-size:28px;color:#525252;letter-spacing:-0.854px;">ago</div>
<div class="t" style="left:1834.01px;top:1274.00px;font-size:24px;color:#393939;letter-spacing:1.114px;">Indexed</div>
<div class="t" style="left:141.11px;top:1368.00px;font-size:28px;color:#525252;letter-spacing:0.335px;">Onboarding summary</div>
<div class="t" style="left:1036.18px;top:1368.00px;font-size:28px;color:#525252;letter-spacing:-1.720px;">STARRED</div>
<div class="t" style="left:2025.44px;top:1368.00px;font-size:28px;color:#525252;letter-spacing:-0.074px;">4.8 KB</div>
<div class="t" style="left:2215.33px;top:1350.00px;font-size:28px;color:#525252;letter-spacing:-0.052px;">7 days</div>
<div class="t" style="left:2215.51px;top:1386.00px;font-size:28px;color:#525252;letter-spacing:-0.854px;">ago</div>
<div class="t" style="left:1834.01px;top:1370.00px;font-size:24px;color:#393939;letter-spacing:1.114px;">Indexed</div>
<div class="t" style="left:141.03px;top:1464.00px;font-size:28px;color:#525252;letter-spacing:0.379px;">Confirm your email to join East Agile</div>
<div class="t" style="left:1036.18px;top:1464.00px;font-size:28px;color:#525252;letter-spacing:-1.720px;">STARRED</div>
<div class="t" style="left:2025.88px;top:1446.00px;font-size:28px;color:#161616;letter-spacing:1.194px;">804</div>
<div class="t" style="left:2024.84px;top:1482.00px;font-size:28px;color:#161616;letter-spacing:0.312px;">Bytes</div>
<div class="t" style="left:2215.33px;top:1446.00px;font-size:28px;color:#525252;letter-spacing:-0.052px;">7 days</div>
<div class="t" style="left:2215.51px;top:1482.00px;font-size:28px;color:#525252;letter-spacing:-0.854px;">ago</div>
<div class="t" style="left:1834.01px;top:1466.00px;font-size:24px;color:#393939;letter-spacing:1.114px;">Indexed</div>
<div class="t" style="left:60.29px;top:1555.00px;font-size:28px;color:#161616;letter-spacing:0.586px;">Items per page:</div>
<div class="t" style="left:298.38px;top:1555.00px;font-size:28px;color:#161616;letter-spacing:0.710px;">10</div>
<div class="t" style="left:439.38px;top:1555.00px;font-size:28px;color:#525252;letter-spacing:0.747px;">1–10 of 15 items</div>
<div class="t" style="left:2275.58px;top:1555.00px;font-size:28px;color:#161616;">1</div>
<div class="t" style="left:2367.93px;top:1555.00px;font-size:28px;color:#161616;letter-spacing:0.058px;">of 2 pages</div>
</body></html>
